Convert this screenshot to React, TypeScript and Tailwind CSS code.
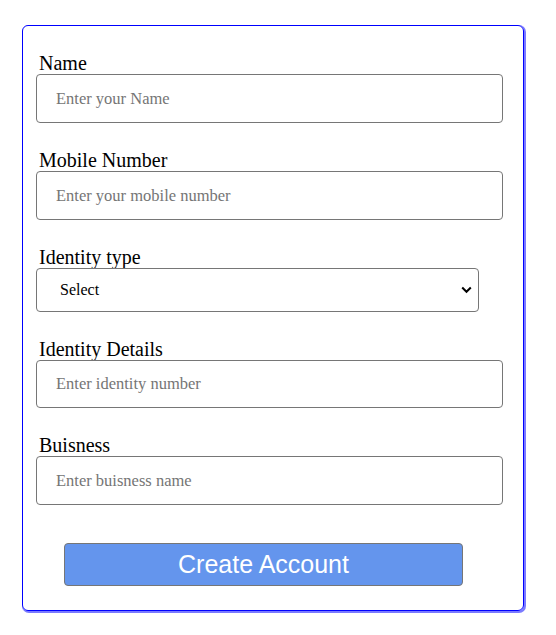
import React from "react";

const serif = { fontFamily: '"Liberation Serif", "Times New Roman", serif' };

function Field({ label, placeholder, h48 }: { label: string; placeholder: string; h48?: boolean }) {
  return (
    <div className="flex flex-col">
      <label className="ml-[3px] text-[20px] leading-[22px] text-black">{label}</label>
      <input
        placeholder={placeholder}
        className={
          (h48 ? "h-[48px] " : "h-[49px] ") +
          "w-[467px] rounded-[4px] border border-[#767676] bg-white pl-[19px] text-[16.5px] text-black outline-none placeholder:text-[#757575]"
        }
        style={serif}
      />
    </div>
  );
}

export default function App() {
  return (
    <div className="min-h-[635px] w-[556px] bg-white" style={serif}>
      <div className="pl-[22px] pt-[25px]">
        <div className="flex w-[502px] flex-col gap-[26px] rounded-[6px] border border-[#0000ff] px-[13px] pb-[24px] pt-[26px] shadow-[1px_1px_0_1px_#7b7bff]">
          <Field label="Name" placeholder="Enter your Name" />
          <Field label="Mobile Number" placeholder="Enter your mobile number" />
          <div className="flex flex-col">
            <label className="ml-[3px] text-[20px] leading-[22px] text-black">Identity type</label>
            <div className="relative h-[44px] w-[443px]">
              <select
                className="h-[44px] w-[443px] appearance-none rounded-[4px] border border-[#767676] bg-white pl-[23px] text-[16px] text-black outline-none"
                style={serif}
                defaultValue=""
              >
                <option value="">Select</option>
                <option value="aadhar">Aadhar</option>
                <option value="pan">PAN</option>
              </select>
              <svg
                className="pointer-events-none absolute right-[7px] top-[18px]"
                width="11"
                height="8"
                viewBox="0 0 11 8"
              >
                <path d="M1.2 1.5 L5.5 5.8 L9.8 1.5" fill="none" stroke="#000" strokeWidth="2" />
              </svg>
            </div>
          </div>
          <Field label="Identity Details" placeholder="Enter identity number" h48 />
          <Field label="Buisness" placeholder="Enter buisness name" />
          <div className="flex pl-[28px] pt-[12px]">
            <button
              className="h-[43px] w-[399px] rounded-[4px] border border-[#767676] bg-[#6495ed] text-[25px] text-white"
              style={{ fontFamily: '"Liberation Sans", Arial, sans-serif' }}
            >
              Create Account
            </button>
          </div>
        </div>
      </div>
    </div>
  );
}
